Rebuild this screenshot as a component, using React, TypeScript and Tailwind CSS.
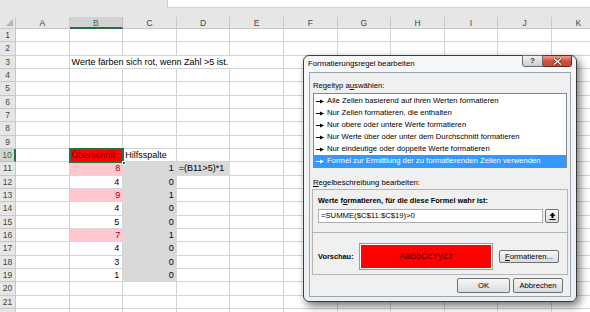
import React from 'react';

const COLS = ['A', 'B', 'C', 'D', 'E', 'F', 'G', 'H', 'I', 'J', 'K'];
const ROWS = 22;

const valuesB: Record<number, string> = { 11: '8', 12: '4', 13: '9', 14: '4', 15: '5', 16: '7', 17: '4', 18: '3', 19: '1' };
const valuesC: Record<number, string> = { 11: '1', 12: '0', 13: '1', 14: '0', 15: '0', 16: '1', 17: '0', 18: '0', 19: '0' };
const pinkRows = [11, 13, 16];

const ruleTypes = [
  'Alle Zellen basierend auf ihren Werten formatieren',
  'Nur Zellen formatieren, die enthalten',
  'Nur obere oder untere Werte formatieren',
  'Nur Werte über oder unter dem Durchschnitt formatieren',
  'Nur eindeutige oder doppelte Werte formatieren',
  'Formel zur Ermittlung der zu formatierenden Zellen verwenden',
];

function Bullet({ light }: { light?: boolean }) {
  const c = light ? '#ffffff' : '#000000';
  return (
    <svg width="8" height="5" viewBox="0 0 8 5" className="shrink-0">
      <rect x="0" y="2" width="5" height="1" fill={c} />
      <polygon points="4,0.5 8,2.5 4,4.5" fill={c} />
    </svg>
  );
}

function Cell({ row, col }: { row: number; col: number }) {
  const base = 'relative border-r border-b border-[#d4d4d4] text-[9px] leading-[13px] whitespace-nowrap px-[2px] text-black';
  if (col === 1 && row === 3) {
    return (
      <div className="relative col-span-4 border-r border-b border-[#d4d4d4] text-[9px] leading-[13px] whitespace-nowrap px-[2px] text-black">
        Werte färben sich rot, wenn Zahl &gt;5 ist.
      </div>
    );
  }
  if (row === 3 && col >= 2 && col <= 4) return null;
  if (col === 1 && row === 10) {
    return (
      <div className="relative bg-[#ff0000] text-[#6a0000] text-[9px] leading-[13px] whitespace-nowrap pl-[2px] outline-2 outline-[#217346] -outline-offset-1 z-10">
        Überschrift
        <span className="absolute right-[-3px] bottom-[-3px] w-[4px] h-[4px] bg-[#217346] border border-white" />
      </div>
    );
  }
  if (col === 1 && valuesB[row]) {
    const pink = pinkRows.includes(row);
    return (
      <div
        className={
          pink
            ? 'bg-[#ffc7ce] text-[#9c0006] text-[9px] leading-[13px] text-right pr-[3px] border-b border-[#ffc7ce]'
            : base + ' text-right pr-[3px]'
        }
      >
        {valuesB[row]}
      </div>
    );
  }
  if (col === 2 && valuesC[row]) {
    return <div className="bg-[#d9d9d9] text-black text-[9px] leading-[13px] text-right pr-[3px]">{valuesC[row]}</div>;
  }
  if (col === 2 && row === 10) {
    return <div className={base}>Hilfsspalte</div>;
  }
  if (col === 3 && row === 11) {
    return <div className="bg-[#d9d9d9] text-black text-[9px] leading-[13px] whitespace-nowrap px-[2px]">=(B11&gt;5)*1</div>;
  }
  return <div className={base} />;
}

function Sheet() {
  const cells: React.ReactNode[] = [];
  cells.push(
    <div key="corner" className="relative bg-[#e6e6e6] border-r border-b border-[#c8c8c8]">
      <svg width="7" height="7" className="absolute right-[2px] bottom-[2px]">
        <polygon points="7,0 7,7 0,7" fill="#b4b4b4" />
      </svg>
    </div>
  );
  COLS.forEach((c, i) => {
    const sel = i === 1;
    cells.push(
      <div
        key={'h' + c}
        className={
          sel
            ? 'bg-[#d3d3d3] border-r border-[#c0c0c0] border-b-2 border-b-[#217346] text-[8.5px] leading-[12px] text-center text-[#3b6b4e]'
            : 'bg-[#e6e6e6] border-r border-b border-[#c8c8c8] text-[8.5px] leading-[12px] text-center text-[#444]'
        }
      >
        {c}
      </div>
    );
  });
  for (let r = 1; r <= ROWS; r++) {
    const sel = r === 10;
    cells.push(
      <div
        key={'r' + r}
        className={
          sel
            ? 'bg-[#d3d3d3] border-b border-[#c0c0c0] border-r-2 border-r-[#217346] text-[8.5px] leading-[13px] text-center text-[#217346]'
            : 'bg-[#e6e6e6] border-r border-b border-[#c8c8c8] text-[8.5px] leading-[13px] text-center text-[#444]'
        }
      >
        {r < ROWS ? r : ''}
      </div>
    );
    COLS.forEach((_, ci) => {
      cells.push(<Cell key={r + '-' + ci} row={r} col={ci} />);
    });
  }
  return (
    <div className="grid grid-cols-[16px_repeat(11,53.6px)] grid-rows-[12px_repeat(22,13.333px)] bg-white">
      {cells}
    </div>
  );
}

function WinButton({ children, className }: { children: React.ReactNode; className?: string }) {
  return (
    <div
      className={
        'flex items-center justify-center rounded-[2px] border border-[#707070] bg-gradient-to-b from-[#f6f6f6] to-[#dcdcdc] text-[7.7px] text-black ' +
        (className ?? '')
      }
    >
      {children}
    </div>
  );
}

function Dialog() {
  return (
    <div className="absolute left-[303px] top-[55px] w-[274px] h-[247px] rounded-[6px] border border-[#3c3c3c] bg-gradient-to-b from-[#f6f7f9] to-[#eceff2] shadow-[3px_4px_9px_rgba(0,0,0,0.55)] flex flex-col">
      <div className="relative h-[16px] flex items-center pl-[4px] text-[7.8px] text-black">
        Formatierungsregel bearbeiten
        <div className="absolute right-[4px] top-[-1px] flex">
          <div className="w-[21px] h-[12px] flex items-center justify-center border border-[#6b6b6b] rounded-bl-[3px] bg-gradient-to-b from-[#f2f2f2] to-[#c9cdd2] text-[8px] leading-none text-[#333] font-bold">
            ?
          </div>
          <div className="w-[29px] h-[12px] flex items-center justify-center border border-l-0 border-[#6b2a22] rounded-br-[3px] bg-gradient-to-b from-[#e8a090] via-[#d0503c] to-[#c44a36]">
            <svg width="9" height="7" viewBox="0 0 9 7">
              <path d="M1 0.5 L8 6.5 M8 0.5 L1 6.5" stroke="#5a1a12" strokeWidth="2.6" />
              <path d="M1 0.5 L8 6.5 M8 0.5 L1 6.5" stroke="#ffffff" strokeWidth="1.4" />
            </svg>
          </div>
        </div>
      </div>
      <div className="mx-[5px] mb-[4px] flex-1 flex flex-col border border-[#9aa4ae] bg-[#f0f0f0] px-[3px] text-[7.7px] text-black">
        <div className="mt-[8px] h-[10px] leading-[10px]">
          Regeltyp a<span className="underline">u</span>swählen:
        </div>
        <div className="mt-[2px] h-[75px] border border-[#828790] bg-white pt-[1px]">
          {ruleTypes.map((t, i) => {
            const sel = i === ruleTypes.length - 1;
            return (
              <div
                key={t}
                className={
                  'h-[12px] flex items-center gap-[3px] pl-[2px] whitespace-nowrap ' +
                  (sel ? 'bg-[#3399ff] text-white' : '')
                }
              >
                <Bullet light={sel} />
                {t}
              </div>
            );
          })}
        </div>
        <div className="mt-[10px] h-[10px] leading-[10px]">
          <span className="underline">R</span>egelbeschreibung bearbeiten:
        </div>
        <div className="mt-[1px] -mx-[1px] h-[86px] flex flex-col border border-[#b5b5b5]">
          <div className="mt-[6px] pl-[5px] h-[10px] leading-[10px] font-bold text-[7.4px]">
            Werte f<span className="underline">o</span>rmatieren, für die diese Formel wahr ist:
          </div>
          <div className="mt-[3px] pl-[5px] flex gap-[2px]">
            <div className="w-[225px] h-[14px] border border-[#abadb3] bg-white pl-[2px] leading-[12px]">
              =SUMME($C$11:$C$19)&gt;0
            </div>
            <WinButton className="w-[14px] h-[14px]">
              <svg width="7" height="8" viewBox="0 0 7 8">
                <path d="M3.5 0.5 L6.5 3.8 L4.5 3.8 L4.5 6 L2.5 6 L2.5 3.8 L0.5 3.8 Z" fill="#000" />
                <rect x="0.5" y="7" width="6" height="1" fill="#000" />
              </svg>
            </WinButton>
          </div>
          <div className="mt-[9px] h-px bg-[#b5b5b5]" />
          <div className="mt-[10px] pl-[5px] flex items-center">
            <div className="w-[41px] font-bold text-[7.4px]">Vorschau:</div>
            <div className="w-[134px] h-[27px] border border-[#9a9a9a] p-[1px] bg-white">
              <div className="w-full h-full bg-[#ff0000] flex items-center justify-center text-[9px] text-[#5c0000]">
                AaBbCcYyZz
              </div>
            </div>
            <WinButton className="ml-[6px] w-[60px] h-[13px]">
              <span>
                <span className="underline">F</span>ormatieren...
              </span>
            </WinButton>
          </div>
        </div>
        <div className="mt-[3px] pr-[4px] flex justify-end gap-[3px]">
          <WinButton className="w-[53px] h-[15px] border-[#3c7fb1] from-[#eaf6fd] to-[#bee6fd]">OK</WinButton>
          <WinButton className="w-[50px] h-[15px]">Abbrechen</WinButton>
        </div>
      </div>
    </div>
  );
}

export default function App() {
  return (
    <div className="relative w-[590px] h-[312px] overflow-hidden bg-white font-['Liberation_Sans',Arial,sans-serif]">
      <div className="h-[17px] bg-[#e6e6e6]">
        <div className="ml-[167px] h-[8px] bg-white border-l border-b border-[#d0d0d0]" />
      </div>
      <Sheet />
      <Dialog />
    </div>
  );
}
